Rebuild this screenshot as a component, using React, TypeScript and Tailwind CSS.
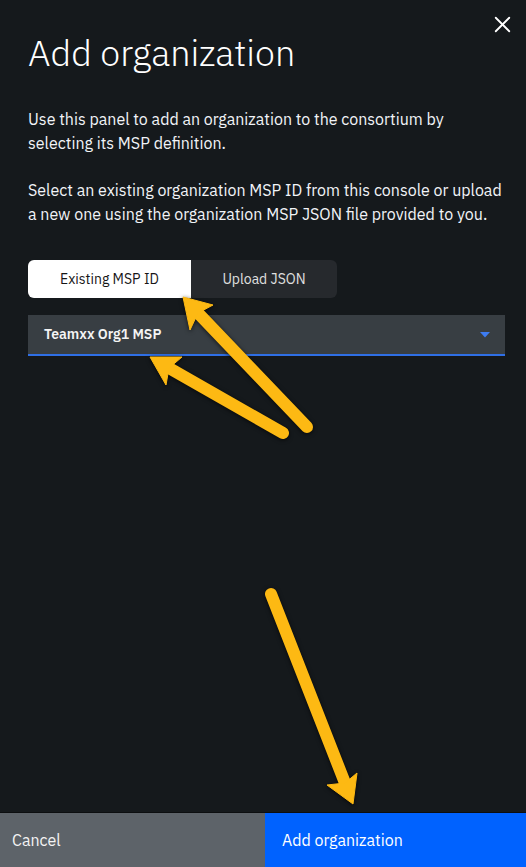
import { X } from 'lucide-react'

// yellow annotation arrows drawn over the panel
const arrows = [
  { tail: [307, 427], notch: [198, 313], head: '183,297 213,305 198,313 190,330' },
  { tail: [283, 433], notch: [169, 368], head: '150,357 182,357 169,368 166,385' },
  { tail: [271, 594], notch: [345, 783], head: '353,804 327,785 345,783 357,773' },
]

function Arrows() {
  return (
    <svg
      width="526"
      height="867"
      viewBox="0 0 526 867"
      className="absolute inset-0 pointer-events-none drop-shadow-[0_1px_2px_rgba(0,0,0,0.7)]"
    >
      {arrows.map((a, i) => (
        <g key={i} fill="#fdb913" stroke="#fdb913">
          <line
            x1={a.tail[0]}
            y1={a.tail[1]}
            x2={a.notch[0]}
            y2={a.notch[1]}
            strokeWidth="12"
            strokeLinecap="round"
          />
          <polygon points={a.head} strokeWidth="1" strokeLinejoin="round" />
        </g>
      ))}
    </svg>
  )
}

export default function App() {
  return (
    <div
      className="relative w-[526px] h-[867px] overflow-hidden bg-[#15191c] text-[#f2f4f8] flex flex-col"
      style={{ fontFamily: '"IBM Plex Sans", Roboto, "Liberation Sans", sans-serif' }}
    >
      <button className="absolute top-[11px] right-[10px] text-white">
        <X size={27} strokeWidth={1.6} />
      </button>

      <div className="flex-1 pl-7 pr-5 pt-[30px]">
        <h1 className="text-[36px] leading-[46px] font-light text-white">Add organization</h1>

        <div className="w-[474px]">
          <p className="mt-[31px] text-[16px] leading-6">
            Use this panel to add an organization to the consortium by selecting its MSP definition.
          </p>
          <p className="mt-[23px] text-[16px] leading-6">
            Select an existing organization MSP ID from this console or upload a new one using the
            organization MSP JSON file provided to you.
          </p>
        </div>

        <div className="mt-[34px] flex w-[309px] h-[38px] rounded-md bg-[#26292d] text-[14px]">
          <button className="w-[163px] rounded-l-md bg-white text-[#161616]">Existing MSP ID</button>
          <button className="flex-1 text-[#e0e0e0]">Upload JSON</button>
        </div>

        <div className="mt-[17px] w-[477px] h-[41px] flex items-center justify-between pl-4 pr-[15px] bg-[#383e43] border-b-2 border-[#2f6fe6]">
          <span className="text-[14px] font-semibold text-[#f4f4f4]">Teamxx Org1 MSP</span>
          <svg width="10" height="6" viewBox="0 0 10 6">
            <polygon points="0,0 10,0 5,5.5" fill="#3d7cf2" />
          </svg>
        </div>
      </div>

      <div className="flex h-[55px] border-t border-[#0c0e10] text-[16px]">
        <button className="w-[265px] bg-[#5d6369] text-left pl-3 text-[#f4f4f4]">Cancel</button>
        <button className="flex-1 bg-[#0062ff] text-left pl-[17px] text-white">Add organization</button>
      </div>

      <Arrows />
    </div>
  )
}
